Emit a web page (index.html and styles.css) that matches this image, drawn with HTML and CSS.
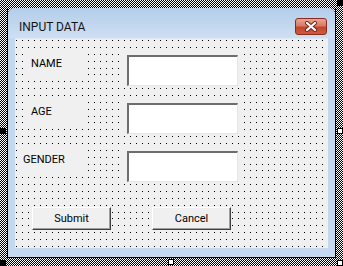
FILE: index.html
```html
<!DOCTYPE html>
<html lang="en">
  <head>
    <meta charset="UTF-8" />
    <title>INPUT DATA</title>
    <link rel="stylesheet" href="styles.css">
  </head>
  <body>
    <div class="designer">
      <div class="form-window">
        <div class="window">
          <div class="title-bar">
            <span class="title">INPUT DATA</span>
            <div class="close-btn">
              <svg width="14" height="11" viewBox="0 0 14 11">
                <path d="M3 2 L11 9 M11 2 L3 9" stroke="#6e2418" stroke-width="4" stroke-linecap="round" fill="none" />
                <path d="M3 2 L11 9 M11 2 L3 9" stroke="#ffffff" stroke-width="2.2" stroke-linecap="round" fill="none" />
              </svg>
            </div>
          </div>

          <div class="client">
            <div class="field-row">
              <div class="field-label">NAME</div>
              <div class="field-box"><div class="textbox"></div></div>
            </div>
            <div class="field-row">
              <div class="field-label">AGE</div>
              <div class="field-box"><div class="textbox"></div></div>
            </div>
            <div class="field-row">
              <div class="field-label field-label-wide">GENDER</div>
              <div class="field-box"><div class="textbox"></div></div>
            </div>

            <div class="button-row">
              <div class="cmd-btn">Submit</div>
              <div class="cmd-btn">Cancel</div>
            </div>
          </div>
        </div>
      </div>

      <!-- sizing handles -->
      <span class="handle handle-dark handle-tr"></span>
      <span class="handle handle-dark handle-ml"></span>
      <span class="handle handle-dark handle-bl"></span>
      <span class="handle handle-light handle-mr"></span>
      <span class="handle handle-light handle-bm"></span>
      <span class="handle handle-light handle-br"></span>
    </div>
  </body>
</html>
```

FILE: styles.css
```css
/* Basic styles */
body {
  margin: 0;
  font-family: Roboto, "Liberation Sans", sans-serif;
}

.designer {
  position: relative;
  width: 343px;
  height: 266px;
  box-sizing: border-box;
  padding: 8px 7px;
  background: repeating-conic-gradient(#000 0 25%, #fff 0 50%) 0 0 / 2px 2px;
}

.form-window {
  height: 250px;
  box-sizing: border-box;
  border: 1px solid #000;
  border-top: none;
  display: flex;
}

.window {
  flex: 1;
  display: flex;
  flex-direction: column;
  border-radius: 6px 6px 0 0;
  background: linear-gradient(#b4cdea, #cddff2 30px, #c4d9ef 30px, #c4d9ef 100%);
}

.title-bar {
  height: 30px;
  display: flex;
  justify-content: space-between;
  align-items: flex-start;
  padding: 0 8px 0 11px;
}

.title {
  padding-top: 12px;
  font-size: 12px;
  line-height: 14px;
  color: #141414;
}

.close-btn {
  margin-top: 10px;
  width: 32px;
  height: 17px;
  box-sizing: border-box;
  border: 1px solid #8a2c1d;
  border-radius: 3px;
  background: linear-gradient(#eba494, #d97a65 45%, #c3452b 55%, #cc5a40);
  display: flex;
  justify-content: center;
  align-items: center;
}

/* design grid: 6px across, 7 rows every 48px down */
.client {
  height: 210px;
  margin: 0 7px;
  box-sizing: border-box;
  padding-top: 9px;
  border-top: 1px solid #dfe8f2;
  background:
    linear-gradient(to bottom,
      transparent 0 1px, #f0f0f0 1px 7px,
      transparent 7px 8px, #f0f0f0 8px 14px,
      transparent 14px 15px, #f0f0f0 15px 21px,
      transparent 21px 22px, #f0f0f0 22px 28px,
      transparent 28px 29px, #f0f0f0 29px 34px,
      transparent 34px 35px, #f0f0f0 35px 41px,
      transparent 41px 42px, #f0f0f0 42px 48px) 0 1px / 6px 48px,
    linear-gradient(to right, transparent 1px, #f0f0f0 1px) 1px 0 / 6px 6px,
    #000;
}

.field-row {
  display: flex;
  height: 40px;
  margin-bottom: 8px;
}

.field-label {
  width: 57px;
  height: 31px;
  margin-left: 10px;
  padding-left: 6px;
  display: flex;
  align-items: center;
  background-color: #f0f0f0;
  font-size: 11px;
  color: #000;
}

.field-label-wide {
  width: 65px;
  margin-left: 3px;
  padding-left: 5px;
}

.field-box {
  margin-left: 34px;
  width: 118px;
  height: 40px;
  box-sizing: border-box;
  padding: 7px 2px 2px 5px;
  background-color: #f0f0f0;
}

.textbox {
  height: 31px;
  box-sizing: border-box;
  background-color: #fff;
  border-style: solid;
  border-width: 2px 1px 1px 2px;
  border-color: #6d6d6d #e6e6e6 #e6e6e6 #6d6d6d;
}

.button-row {
  display: flex;
  gap: 41px;
  margin-top: 23px;
  padding-left: 17px;
}

.cmd-btn {
  width: 79px;
  height: 23px;
  box-sizing: border-box;
  display: flex;
  justify-content: center;
  align-items: center;
  background-color: #f0f0f0;
  border-style: solid;
  border-width: 1px;
  border-color: #fff #404040 #404040 #fff;
  box-shadow: inset -1px -1px #a0a0a0;
  font-size: 11px;
  color: #000;
}

/* selection handles */
.handle {
  position: absolute;
  width: 6px;
  height: 6px;
  box-sizing: border-box;
  border: 1px solid #000;
}

.handle-dark {
  background-color: #000;
}

.handle-light {
  background-color: #fff;
}

.handle-tr { top: 0; left: 337px; }
.handle-ml { top: 128px; left: 0; }
.handle-bl { top: 260px; left: 0; }
.handle-mr { top: 128px; left: 337px; }
.handle-bm { top: 259px; left: 168px; }
.handle-br { top: 260px; left: 337px; }
```
